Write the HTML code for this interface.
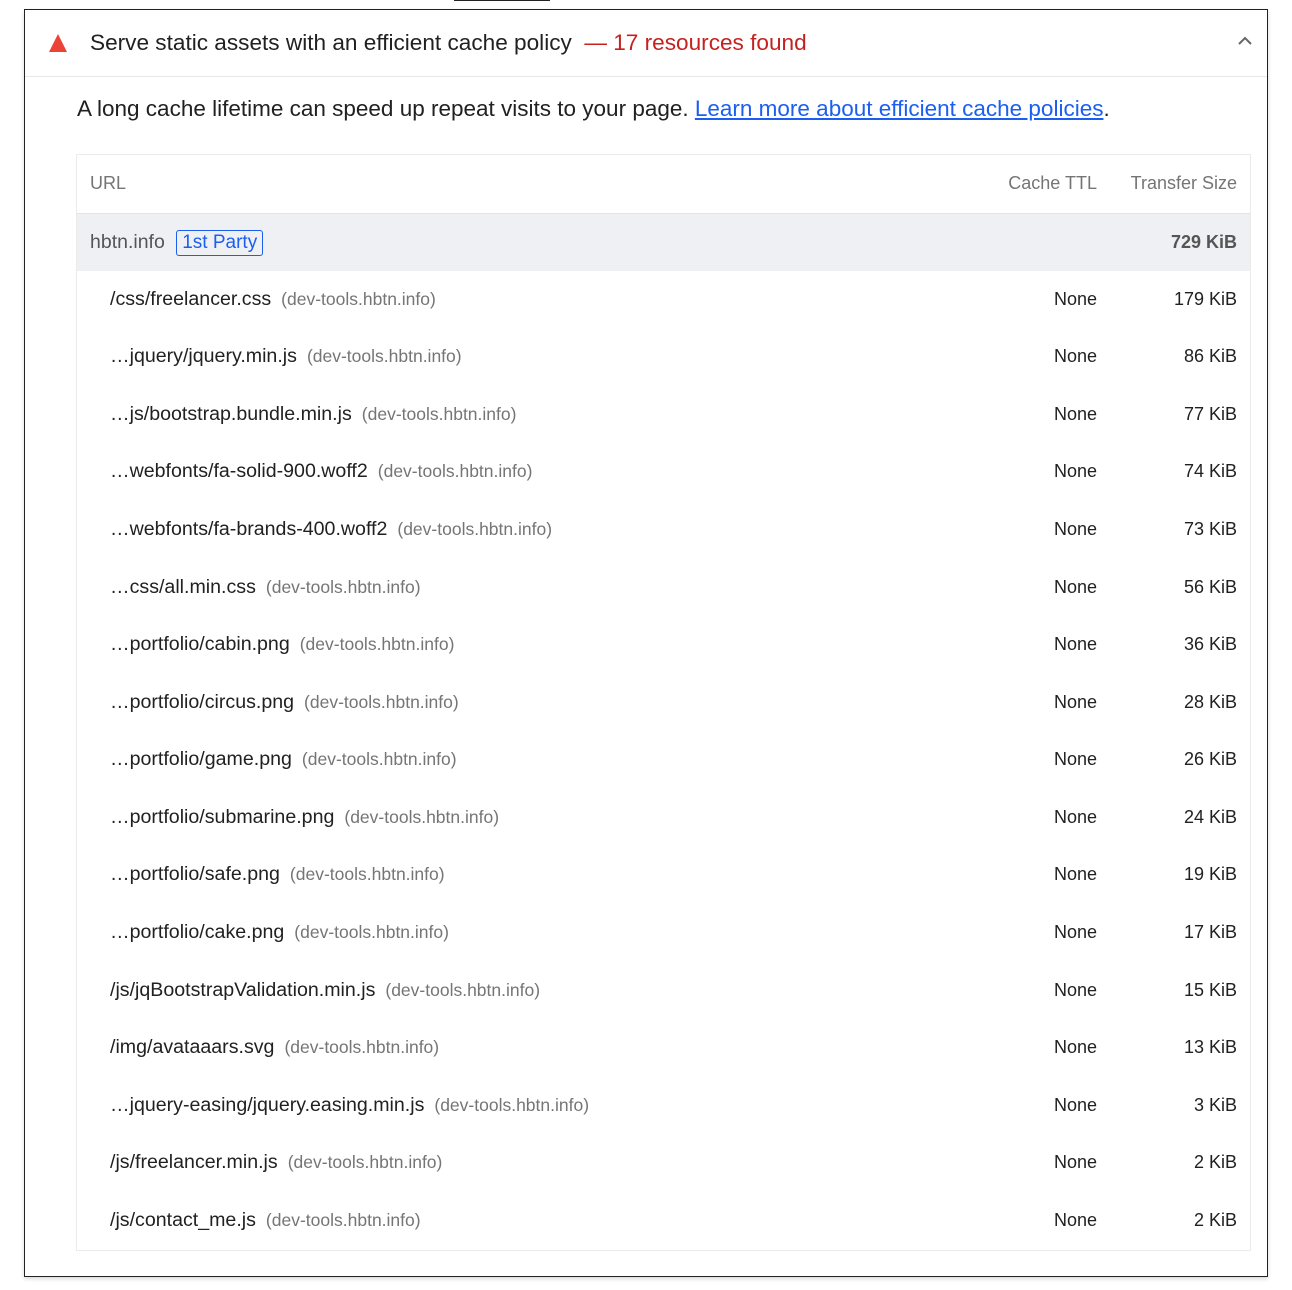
<!DOCTYPE html>
<html><head><meta charset="utf-8"><style>
*{box-sizing:border-box;margin:0;padding:0}
body{width:1292px;height:1290px;background:#fff;font-family:"Liberation Sans",Arial,sans-serif;color:#212121;position:relative;overflow:hidden}
.topline{position:absolute;left:454px;top:0;width:96px;height:1px;background:#222}
.box{position:absolute;left:24px;top:9px;width:1244px;height:1268px;border:1px solid #222;box-shadow:0 2px 4px rgba(0,0,0,.15)}
.hdr{height:67px;border-bottom:1px solid #e8e8e8;position:relative}
.tri{position:absolute;left:24px;top:24px;width:0;height:0;border-left:9px solid transparent;border-right:9px solid transparent;border-bottom:18px solid #eb4335}
.title{position:absolute;left:65px;top:20px;font-size:22.6px;white-space:nowrap}
.title span{color:#c5221f}
.chev{position:absolute;right:14px;top:26px}
.desc{position:absolute;left:52px;top:86px;font-size:22.5px;white-space:nowrap}
.desc a{color:#1a5ff0;text-decoration:underline}
.tbl{position:absolute;left:51px;top:144px;width:1175px;height:1097px;border:1px solid #ebebeb}
.row{position:absolute;left:0;width:1173px;height:58px;font-size:18px}
.row .u{position:absolute;left:33px;top:18px;white-space:nowrap;font-size:19.6px;top:17px}
.row .u i{font-style:normal;color:#757575;font-size:17.5px;margin-left:10px}
.row .t{position:absolute;right:153px;top:18px}
.row .s{position:absolute;right:13px;top:18px}
.th{color:#757575}
.grp{background:#eff0f3}
</style></head><body>
<div class="topline"></div>
<div class="box">
 <div class="hdr">
  <div class="tri"></div>
  <div class="title">Serve static assets with an efficient cache policy &nbsp;<span>— 17 resources found</span></div>
  <svg class="chev" width="16" height="10" viewBox="0 0 16 10"><path d="M2 8 L8 2 L14 8" fill="none" stroke="#666" stroke-width="2"/></svg>
 </div>
 <div class="desc">A long cache lifetime can speed up repeat visits to your page. <a>Learn more about efficient cache policies</a>.</div>
 <div class="tbl">
  <div class="row th" style="top:0"><div class="u" style="left:13px;font-size:18px;top:18px">URL</div><div class="t">Cache TTL</div><div class="s">Transfer Size</div></div>
  <div class="row grp" style="top:58px;border-top:1px solid #e4e4e4"><div class="u" style="left:13px;top:16px;color:#555;font-size:19.5px">hbtn.info <span style="display:inline-block;border:1px solid #1a5ff0;border-radius:3px;color:#1a5ff0;padding:1px 5px;margin-left:6px;font-size:19px">1st Party</span></div><div class="s" style="font-weight:bold;color:#555">729 KiB</div></div>
  <div class="row" style="top:116px"><div class="u">/css/freelancer.css<i>(dev-tools.hbtn.info)</i></div><div class="t">None</div><div class="s">179 KiB</div></div>
  <div class="row" style="top:173px"><div class="u">…jquery/jquery.min.js<i>(dev-tools.hbtn.info)</i></div><div class="t">None</div><div class="s">86 KiB</div></div>
  <div class="row" style="top:231px"><div class="u">…js/bootstrap.bundle.min.js<i>(dev-tools.hbtn.info)</i></div><div class="t">None</div><div class="s">77 KiB</div></div>
  <div class="row" style="top:288px"><div class="u">…webfonts/fa-solid-900.woff2<i>(dev-tools.hbtn.info)</i></div><div class="t">None</div><div class="s">74 KiB</div></div>
  <div class="row" style="top:346px"><div class="u">…webfonts/fa-brands-400.woff2<i>(dev-tools.hbtn.info)</i></div><div class="t">None</div><div class="s">73 KiB</div></div>
  <div class="row" style="top:404px"><div class="u">…css/all.min.css<i>(dev-tools.hbtn.info)</i></div><div class="t">None</div><div class="s">56 KiB</div></div>
  <div class="row" style="top:461px"><div class="u">…portfolio/cabin.png<i>(dev-tools.hbtn.info)</i></div><div class="t">None</div><div class="s">36 KiB</div></div>
  <div class="row" style="top:519px"><div class="u">…portfolio/circus.png<i>(dev-tools.hbtn.info)</i></div><div class="t">None</div><div class="s">28 KiB</div></div>
  <div class="row" style="top:576px"><div class="u">…portfolio/game.png<i>(dev-tools.hbtn.info)</i></div><div class="t">None</div><div class="s">26 KiB</div></div>
  <div class="row" style="top:634px"><div class="u">…portfolio/submarine.png<i>(dev-tools.hbtn.info)</i></div><div class="t">None</div><div class="s">24 KiB</div></div>
  <div class="row" style="top:691px"><div class="u">…portfolio/safe.png<i>(dev-tools.hbtn.info)</i></div><div class="t">None</div><div class="s">19 KiB</div></div>
  <div class="row" style="top:749px"><div class="u">…portfolio/cake.png<i>(dev-tools.hbtn.info)</i></div><div class="t">None</div><div class="s">17 KiB</div></div>
  <div class="row" style="top:807px"><div class="u">/js/jqBootstrapValidation.min.js<i>(dev-tools.hbtn.info)</i></div><div class="t">None</div><div class="s">15 KiB</div></div>
  <div class="row" style="top:864px"><div class="u">/img/avataaars.svg<i>(dev-tools.hbtn.info)</i></div><div class="t">None</div><div class="s">13 KiB</div></div>
  <div class="row" style="top:922px"><div class="u">…jquery-easing/jquery.easing.min.js<i>(dev-tools.hbtn.info)</i></div><div class="t">None</div><div class="s">3 KiB</div></div>
  <div class="row" style="top:979px"><div class="u">/js/freelancer.min.js<i>(dev-tools.hbtn.info)</i></div><div class="t">None</div><div class="s">2 KiB</div></div>
  <div class="row" style="top:1037px"><div class="u">/js/contact_me.js<i>(dev-tools.hbtn.info)</i></div><div class="t">None</div><div class="s">2 KiB</div></div>
 </div>
</div>
</body></html>
